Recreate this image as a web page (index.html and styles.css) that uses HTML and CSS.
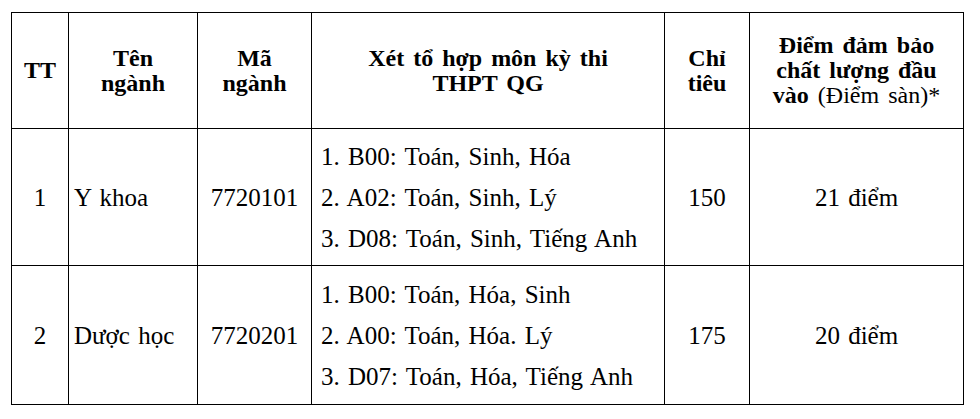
FILE: index.html
```html
<!DOCTYPE html>
<html lang="vi">
<head>
<meta charset="utf-8">
<link rel="stylesheet" href="styles.css">
</head>
<body>
<table class="admit">
  <colgroup>
    <col class="c-tt">
    <col class="c-ten">
    <col class="c-ma">
    <col class="c-xet">
    <col class="c-chi">
    <col class="c-diem">
  </colgroup>
  <thead>
    <tr class="head-row">
      <th>TT</th>
      <th>Tên<br>ngành</th>
      <th>Mã<br>ngành</th>
      <th>Xét tổ hợp môn kỳ thi<br>THPT QG</th>
      <th>Chỉ<br>tiêu</th>
      <th>Điểm đảm bảo<br>chất lượng đầu<br>vào <span class="light">(Điểm sàn)*</span></th>
    </tr>
  </thead>
  <tbody>
    <tr class="row-1">
      <td class="center">1</td>
      <td class="name">Y khoa</td>
      <td class="center">7720101</td>
      <td class="combos">
        <div class="combo">1. B00: Toán, Sinh, Hóa</div>
        <div class="combo">2. A02: Toán, Sinh, Lý</div>
        <div class="combo">3. D08: Toán, Sinh, Tiếng Anh</div>
      </td>
      <td class="center">150</td>
      <td class="center">21 điểm</td>
    </tr>
    <tr class="row-2">
      <td class="center">2</td>
      <td class="name">Dược học</td>
      <td class="center">7720201</td>
      <td class="combos">
        <div class="combo">1. B00: Toán, Hóa, Sinh</div>
        <div class="combo">2. A00: Toán, Hóa. Lý</div>
        <div class="combo">3. D07: Toán, Hóa, Tiếng Anh</div>
      </td>
      <td class="center">175</td>
      <td class="center">20 điểm</td>
    </tr>
  </tbody>
</table>
</body>
</html>
```

FILE: styles.css
```css
html, body {
  margin: 0;
  padding: 0;
  background: #ffffff;
}
body {
  padding: 12px 0 0 11px;
  font-family: "Liberation Serif", serif;
  color: #000000;
}
.admit {
  border-collapse: collapse;
  table-layout: fixed;
  width: 952px;
  font-family: "Liberation Serif", serif;
}
.c-tt { width: 57px; }
.c-ten { width: 129px; }
.c-ma { width: 114px; }
.c-xet { width: 353px; }
.c-chi { width: 85px; }
.c-diem { width: 214px; }

.admit th,
.admit td {
  border: 1px solid #000000;
  padding: 0;
  vertical-align: middle;
}
.admit th {
  font-size: 24px;
  font-weight: bold;
  line-height: 25px;
  text-align: center;
  word-spacing: 3px;
}
.head-row { height: 116px; }
.row-1 { height: 137px; }
.row-2 { height: 139px; }

.admit td {
  font-size: 25px;
  line-height: 41px;
  word-spacing: 2px;
}
.admit .light { font-weight: normal; }
.admit .center { text-align: center; }
.admit .name { padding-left: 5px; }
.admit .combos { padding-left: 9px; }
.combo { white-space: nowrap; }
```
